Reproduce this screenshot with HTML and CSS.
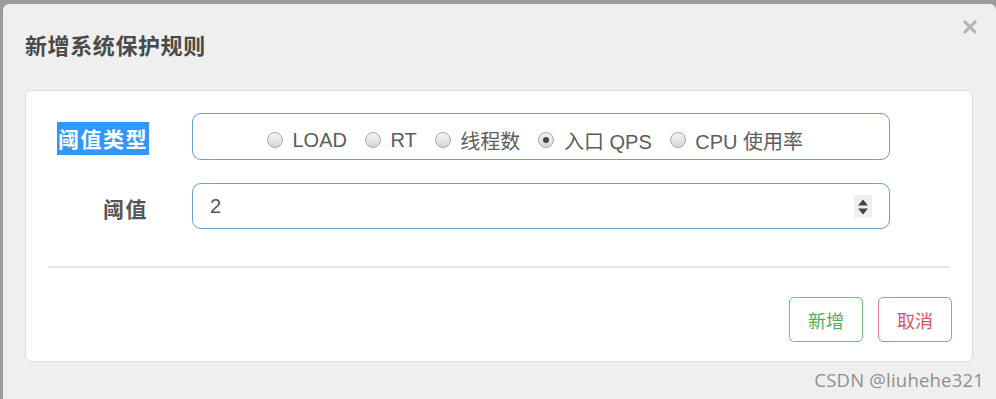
FILE: index.html
```html
<!DOCTYPE html>
<html lang="zh-CN">
<head>
    <meta charset="UTF-8">
    <meta name="viewport" content="width=device-width, initial-scale=1.0">
    <title>新增系统保护规则</title>
    <link rel="stylesheet" href="styles.css">
</head>
<body>
    <div class="modal">
        <div class="modal-header">
            <h4 class="modal-title">新增系统保护规则</h4>
            <button class="close" type="button" aria-label="关闭">
                <svg width="16" height="16" viewBox="0 0 16 16">
                    <path d="M2 2 L14 14 M14 2 L2 14" stroke="#b3b3b3" stroke-width="3" stroke-linecap="butt"/>
                </svg>
            </button>
        </div>

        <div class="panel">
            <div class="form-row first">
                <label class="form-label"><span class="selected">阈值类型</span></label>
                <div class="form-control radios">
                    <label class="radio"><input type="radio" name="grade"> LOAD</label>
                    <label class="radio"><input type="radio" name="grade"> RT</label>
                    <label class="radio"><input type="radio" name="grade"> 线程数</label>
                    <label class="radio"><input type="radio" name="grade" checked> 入口 QPS</label>
                    <label class="radio"><input type="radio" name="grade"> CPU 使用率</label>
                </div>
            </div>

            <div class="form-row">
                <label class="form-label">阈值</label>
                <div class="form-control number">
                    <span class="value">2</span>
                    <span class="spinner">
                        <svg width="18" height="23" viewBox="0 0 18 23">
                            <path d="M4 10.5 L9 4.5 L14 10.5 Z" fill="#444"/>
                            <path d="M4 13.5 L9 19.5 L14 13.5 Z" fill="#444"/>
                        </svg>
                    </span>
                </div>
            </div>

            <hr class="divider">

            <div class="footer">
                <button class="btn btn-add" type="button">新增</button>
                <button class="btn btn-cancel" type="button">取消</button>
            </div>
        </div>

        <div class="watermark">CSDN @liuhehe321</div>
    </div>
</body>
</html>
```

FILE: styles.css
```css
body {
    margin: 0;
    background: #9b9b9b;
    font-family: "Liberation Sans", "Noto Sans CJK SC", Arial, sans-serif;
    color: #555;
}

.modal {
    position: relative;
    margin: 4px 0 0 3px;
    height: 395px;
    box-sizing: border-box;
    padding: 0 23px 0 22px;
    background: #efefef;
    border-radius: 6px 6px 0 0;
}

.modal-header {
    height: 86px;
    box-sizing: border-box;
    padding-top: 25px;
}

.modal-title {
    margin: 0;
    font-family: "Noto Sans CJK SC", sans-serif;
    font-size: 22px;
    line-height: 30px;
    font-weight: bold;
    color: #4a4a4a;
    letter-spacing: 0.6px;
}

.close {
    position: absolute;
    top: 15px;
    right: 18px;
    padding: 0;
    border: none;
    background: none;
    line-height: 0;
}

.panel {
    background: #fff;
    border: 1px solid #dcdcdc;
    border-radius: 6px;
    height: 272px;
    box-sizing: border-box;
    padding-top: 22px;
}

.form-row {
    display: flex;
    align-items: center;
    margin-bottom: 23px;
}

.form-label {
    width: 122px;
    margin-right: 44px;
    text-align: right;
    font-family: "Noto Sans CJK SC", sans-serif;
    font-size: 21px;
    font-weight: bold;
    letter-spacing: 1.5px;
    color: #555;
    padding-top: 4px;
}

.form-label .selected {
    display: inline-block;
    background: #3297fd;
    color: #fff;
    line-height: 33px;
    padding: 0 1px;
    margin-right: -1px;
}

.form-control {
    width: 698px;
    box-sizing: border-box;
    border: 1px solid #6b9fd3;
    border-radius: 9px;
    background: #fff;
}

.radios {
    height: 47px;
    display: flex;
    align-items: center;
    justify-content: center;
    padding: 7px 12px 0 0;
    font-size: 20px;
    color: #5c5c5c;
}

.radio {
    display: flex;
    align-items: center;
    margin: 0 9px;
    white-space: pre;
}

.radio input {
    appearance: none;
    -webkit-appearance: none;
    width: 16px;
    height: 16px;
    margin: 0 4px 0 0;
    border: 1px solid #a9a9a9;
    border-radius: 50%;
    background: linear-gradient(#f4f4f4, #d6d6d6);
    box-sizing: border-box;
    position: relative;
}

.radio input:checked::after {
    content: "";
    position: absolute;
    top: 4px;
    left: 4px;
    width: 6px;
    height: 6px;
    border-radius: 50%;
    background: #444;
}

.number {
    height: 46px;
    display: flex;
    align-items: center;
    justify-content: space-between;
    padding: 0 17px 0 17px;
    font-size: 20px;
}

.spinner {
    background: #efefef;
    line-height: 0;
}

.divider {
    margin: 37px 22px 0 22px;
    border: none;
    border-top: 2px solid #e6e6e6;
}

.footer {
    display: flex;
    justify-content: flex-end;
    gap: 15px;
    padding: 29px 20px 0 0;
}

.btn {
    width: 74px;
    height: 45px;
    border-radius: 5px;
    background: #fff;
    font-family: "Noto Sans CJK SC", sans-serif;
    font-size: 18px;
    padding: 0;
}

.btn-add {
    color: #4cae52;
    border: 1px solid #71c47a;
}

.btn-cancel {
    color: #e0535d;
    border: 1px solid #e57f88;
}

.watermark {
    position: absolute;
    top: 363px;
    right: 12px;
    font-family: "Open Sans", sans-serif;
    font-size: 18.5px;
    color: #8f8f8f;
    letter-spacing: 0.2px;
}
```
